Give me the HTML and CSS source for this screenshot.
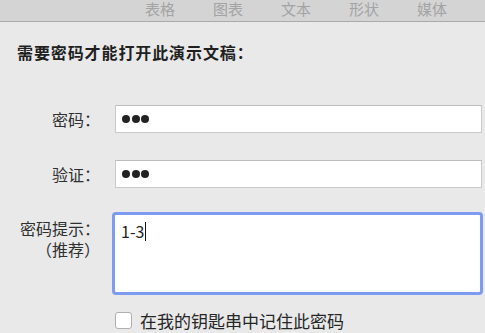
FILE: index.html
```html
<!DOCTYPE html>
<html lang="zh-CN">
<head>
<meta charset="utf-8">
<link rel="stylesheet" href="styles.css">
</head>
<body>
<div class="toolbar">
  <span class="tab">表格</span>
  <span class="tab">图表</span>
  <span class="tab">文本</span>
  <span class="tab">形状</span>
  <span class="tab">媒体</span>
</div>
<div class="panel">
  <h1 class="title">需要密码才能打开此演示文稿：</h1>
  <div class="form">
    <div class="row">
      <label class="label">密码：</label>
      <div class="field"><span class="dot"></span><span class="dot"></span><span class="dot"></span></div>
    </div>
    <div class="row">
      <label class="label">验证：</label>
      <div class="field"><span class="dot"></span><span class="dot"></span><span class="dot"></span></div>
    </div>
    <div class="row row-hint">
      <label class="label label-hint"><span class="hint-line">密码提示：</span><span class="hint-line">（推荐）</span></label>
      <div class="hint"><span class="hint-text">1-3</span><span class="caret"></span></div>
    </div>
    <div class="row row-check">
      <div class="spacer"></div>
      <div class="check"><span class="box"></span><span class="check-text">在我的钥匙串中记住此密码</span></div>
    </div>
  </div>
</div>
</body>
</html>
```
FILE: styles.css
```css
html, body {
  margin: 0;
  padding: 0;
  width: 485px;
  height: 333px;
  overflow: hidden;
  background: #e9e9ea;
  font-family: "Noto Sans CJK SC", "Noto Sans", sans-serif;
}
.toolbar {
  height: 21px;
  background: #d4d4d5;
  border-bottom: 1px solid #aaaaab;
  display: flex;
  align-items: flex-start;
  padding-left: 145px;
  gap: 38px;
}
.tab {
  font-size: 15px;
  line-height: 18px;
  color: #a3a3a4;
  width: 30px;
  white-space: nowrap;
}
.panel {
  padding-top: 19px;
}
.title {
  margin: 0 0 0 17px;
  font-size: 16px;
  line-height: 22px;
  font-weight: bold;
  color: #1f1f1f;
  letter-spacing: 0.9px;
}
.form {
  margin-top: 21px;
  display: flex;
  flex-direction: column;
}
.row {
  display: flex;
  align-items: center;
  margin-top: 21px;
}
.row + .row {
  margin-top: 27px;
}
.label {
  flex: none;
  width: 117px;
  text-align: right;
  font-size: 16px;
  color: #2f2f2f;
  padding-right: 17px;
  box-sizing: border-box;
  line-height: 20px;
}
.field {
  width: 367px;
  height: 28px;
  box-sizing: border-box;
  margin-left: -2px;
  background: #fff;
  border: 1px solid #c9c9ca;
  border-top-color: #bdbdbe;
  display: flex;
  align-items: center;
  padding-left: 6px;
  gap: 1.5px;
}
.dot {
  width: 8px;
  height: 8px;
  border-radius: 50%;
  background: #222;
}
.row-hint {
  align-items: flex-start;
  margin-top: 24px !important;
}
.label-hint {
  display: flex;
  flex-direction: column;
  align-items: flex-end;
  padding-top: 6px;
  gap: 0;
}
.hint-line {
  display: block;
  line-height: 21px;
}
.hint {
  width: 371px;
  height: 83px;
  margin-left: -5px;
  box-sizing: border-box;
  background: #fff;
  border: 3px solid #7d9cf0;
  border-radius: 4px;
  padding: 6px 0 0 6px;
  display: flex;
  align-items: flex-start;
}
.hint-text {
  font-size: 16px;
  line-height: 20px;
  color: #222;
}
.caret {
  width: 1px;
  height: 19px;
  background: #111;
  margin-left: 1px;
  margin-top: 1px;
}
.row-check {
  margin-top: 15px !important;
}
.spacer {
  width: 115px;
  flex: none;
}
.check {
  display: flex;
  align-items: center;
  gap: 8px;
}
.box {
  width: 15px;
  height: 15px;
  border: 1px solid #b0b0b1;
  border-radius: 3px;
  background: #fff;
}
.check-text {
  font-size: 17px;
  line-height: 21px;
  color: #262626;
}
```
